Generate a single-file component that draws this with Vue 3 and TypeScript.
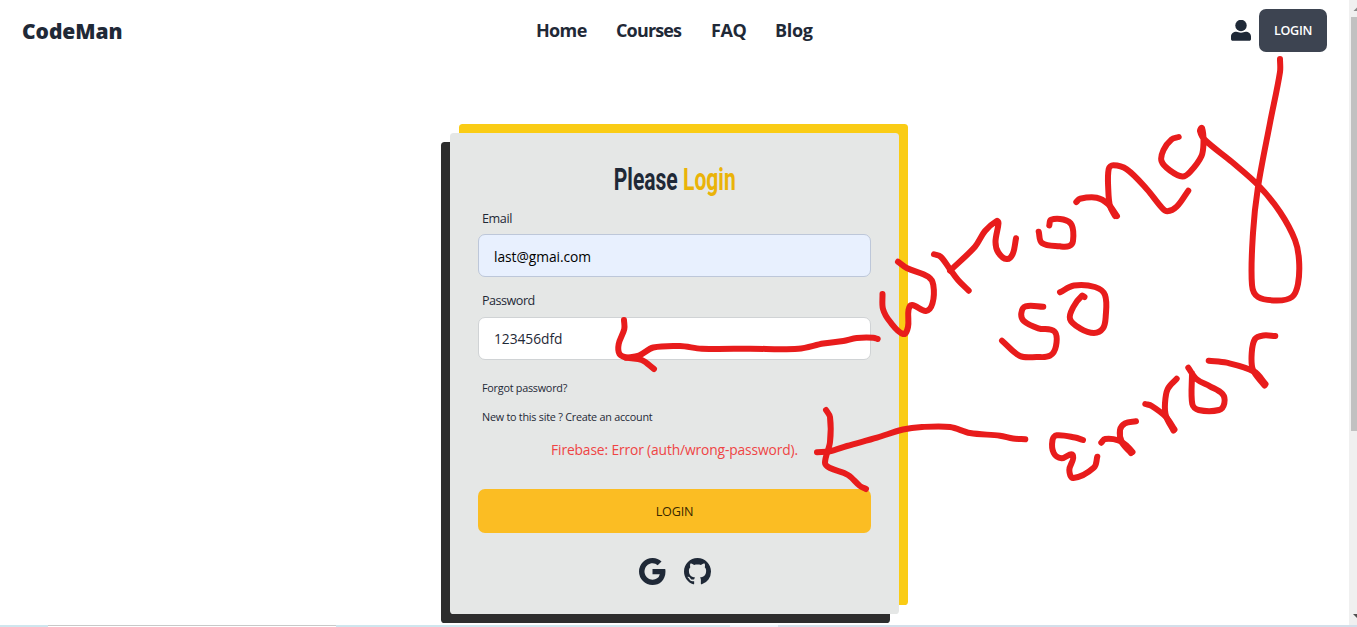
<script setup lang="ts">
import { ref } from 'vue'

type Point = [number, number]

const links = [
  { label: 'Home', cls: 'home' },
  { label: 'Courses', cls: 'courses' },
  { label: 'FAQ', cls: 'faq' },
  { label: 'Blog', cls: 'blog' },
]
const email = ref('last@gmai.com')
const password = ref('123456dfd')

// Freehand pen strokes, in page coordinates.
const strokes: Point[][] = [
  // long loop under the header button, ending in the "g"
  [[1280, 59], [1280, 72], [1270, 123], [1258, 187], [1253, 233], [1252, 285], [1258, 297], [1277, 300.5], [1292, 297], [1298, 284], [1299, 260], [1295, 240], [1280, 212], [1259, 186], [1232, 162], [1205, 140], [1200, 131], [1202, 128], [1203.5, 142], [1201.5, 156], [1190, 172], [1182.5, 176.5], [1170, 170.5], [1161.5, 161], [1163.5, 150], [1171.5, 139.5], [1178.7, 137]],
  // n
  [[1076.3, 202], [1080, 198.7], [1096.7, 197.7], [1108, 204], [1117, 216]],
  [[1115, 216], [1110, 206], [1108.3, 190], [1108.7, 169], [1113.3, 165.3], [1126.7, 169.3], [1146.7, 189], [1161.7, 207.5], [1167.3, 211.3], [1176.7, 206.7], [1188.3, 190.7]],
  // o
  [[1049.3, 225.3], [1051, 219.8], [1063.3, 219.5], [1071.7, 225], [1073, 241], [1069.3, 246], [1060, 246.3], [1042, 243], [1038.7, 231.7]],
  // r
  [[934, 254.3], [940.7, 256.7], [950, 269.3], [958, 280], [968.7, 290.7]],
  [[950, 270.7], [975, 246.7], [985, 231], [996.7, 221], [998.5, 223], [995.5, 241.7], [998.3, 252.5], [1006.7, 259], [1012.7, 254], [1016, 238.3]],
  // w
  [[898, 261.7], [906.7, 268], [928.3, 276.7], [933.3, 285], [932.5, 303.3], [926, 311], [912, 305], [908.5, 310], [908, 327], [903.3, 334], [890, 321.7], [883, 309], [882.5, 294]],
  // so
  [[1043.3, 306.7], [1025.5, 306.3], [1021.3, 313.3], [1023.8, 321], [1038.3, 328.3], [1054.5, 331.5], [1056, 346], [1050, 355.7], [1036.7, 357], [1020, 356], [1002, 340.7]],
  [[1084.5, 297], [1082, 295.7], [1073.3, 307], [1070, 319], [1080, 328.3], [1094, 333], [1103, 328.3], [1105.7, 316.7], [1105, 295], [1095, 287], [1074, 285.5], [1060, 292.3]],
  // Error
  [[1083, 440], [1075, 437.5], [1056.7, 435.3], [1052.5, 440], [1053.7, 453], [1061.7, 458.3], [1072.7, 455], [1069.3, 470], [1073.3, 478], [1094, 467.5], [1097.3, 456.7]],
  [[1101.3, 442.7], [1105, 439], [1118.3, 440.3], [1127, 446], [1132.5, 452]],
  [[1131, 453], [1122, 442.5], [1120, 430], [1125, 423.3], [1136, 421.3]],
  [[1145.3, 404], [1151.7, 406], [1166, 417], [1174.5, 429.5]],
  [[1173.5, 430.5], [1166, 416], [1165, 403.3], [1167.7, 389], [1176.7, 378.7]],
  [[1188.3, 367.7], [1196.7, 379.3], [1210, 386.3], [1222.5, 394], [1224.3, 403.3], [1219, 410], [1198.5, 410], [1192.3, 404], [1192, 373.3]],
  [[1208.7, 360.7], [1226.7, 362.7], [1254, 371.5], [1265.5, 384]],
  [[1264.5, 385.5], [1253, 370], [1251.7, 353.3], [1255, 339], [1263.3, 335.5], [1275.3, 336]],
  // arrow to the password field
  [[624, 320], [624.3, 329], [618.7, 344], [619.5, 354], [626.7, 357.7], [641.7, 360], [654, 369]],
  [[626, 357.7], [639, 355.5], [653.3, 347.5], [680, 346], [701.7, 348.7], [750, 348.7], [798.3, 348.7], [823.3, 343.5], [843.3, 341], [856.7, 338], [873.3, 337.7], [877.7, 339]],
  // arrow to the error message
  [[826, 410], [830, 417], [830, 442], [825, 463], [830, 468], [848, 475], [860, 486], [866, 489]],
  [[817, 452.3], [830, 451.3], [847, 446], [877, 437.7], [903, 429.5], [922, 427], [950, 427], [970, 433], [1000, 435.7], [1013, 438.5], [1025.3, 439.3]],
]

// Catmull-Rom spline through the points, written as cubic Béziers.
function spline(points: Point[]): string {
  const at = (i: number): Point => points[Math.max(0, Math.min(points.length - 1, i))]
  let d = `M${at(0).join(' ')}`
  for (let i = 0; i < points.length - 1; i++) {
    const [a, b, c, e] = [at(i - 1), at(i), at(i + 1), at(i + 2)]
    const len = Math.hypot(c[0] - b[0], c[1] - b[1])
    const before = Math.hypot(c[0] - a[0], c[1] - a[1]) || 1
    const after = Math.hypot(e[0] - b[0], e[1] - b[1]) || 1
    const k = len / 3
    d += `C${b[0] + ((c[0] - a[0]) / before) * k} ${b[1] + ((c[1] - a[1]) / before) * k} `
    d += `${c[0] - ((e[0] - b[0]) / after) * k} ${c[1] - ((e[1] - b[1]) / after) * k} ${c[0]} ${c[1]}`
  }
  return d
}
const paths = strokes.map(spline)
</script>

<template>
  <div class="page">
    <header class="header">
      <a class="brand">CodeMan</a>
      <nav class="nav">
        <a v-for="l in links" :key="l.label" :class="l.cls">{{ l.label }}</a>
      </nav>
      <div class="account">
        <svg class="user" viewBox="0 0 20 21">
          <circle cx="10" cy="5.5" r="5.7" />
          <path d="M0 19v-2.500C0 13.700 2.500 11.800 5.300 11.800c1.800 0 2.600.9 4.700.9s2.900-.9 4.700-.9c2.800 0 5.300 1.900 5.300 4.700V19c0 1.200-.7 1.800-1.800 1.800H1.800C.7 20.800 0 20.200 0 19z" />
        </svg>
        <button class="signin"><span>LOGIN</span></button>
      </div>
    </header>

    <main class="main">
      <form class="card" @submit.prevent>
        <h1 class="title"><span>Please <em>Login</em></span></h1>
        <label class="label l-email" for="email">Email</label>
        <input id="email" v-model="email" class="field filled" type="text" />
        <label class="label l-pass" for="password">Password</label>
        <input id="password" v-model="password" class="field pass" type="text" />
        <a class="small forgot">Forgot password?</a>
        <a class="small create">New to this site ? Create an account</a>
        <p class="error">Firebase: Error (auth/wrong-password).</p>
        <button class="submit"><span>LOGIN</span></button>
        <div class="social">
          <svg viewBox="0 0 16 16"><path d="M15.545 6.558a9.42 9.42 0 0 1 .139 1.626c0 2.434-.87 4.492-2.384 5.885h.002C11.978 15.292 10.158 16 8 16A8 8 0 1 1 8 0a7.689 7.689 0 0 1 5.352 2.082l-2.284 2.284A4.347 4.347 0 0 0 8 3.166c-2.087 0-3.86 1.408-4.492 3.304a4.792 4.792 0 0 0 0 3.063h.003c.635 1.893 2.405 3.301 4.492 3.301 1.078 0 2.004-.276 2.722-.764h-.003a3.702 3.702 0 0 0 1.599-2.431H8v-3.080h7.545z" /></svg>
          <svg viewBox="0 0 16 16"><path d="M8 0C3.580 0 0 3.580 0 8c0 3.540 2.290 6.530 5.470 7.590.4.070.55-.17.55-.38 0-.19-.01-.82-.01-1.490-2.010.37-2.530-.49-2.690-.94-.09-.23-.48-.94-.82-1.130-.28-.15-.68-.52-.01-.53.63-.01 1.080.58 1.230.82.72 1.210 1.870.87 2.330.66.070-.52.28-.87.51-1.070-1.780-.2-3.640-.89-3.640-3.950 0-.87.31-1.590.82-2.150-.08-.2-.36-1.020.08-2.120 0 0 .67-.21 2.200.82.64-.18 1.320-.27 2-.27.68 0 1.360.09 2 .27 1.530-1.040 2.200-.82 2.200-.82.44 1.100.16 1.920.08 2.120.51.56.82 1.270.82 2.150 0 3.070-1.870 3.750-3.650 3.950.29.25.54.73.54 1.480 0 1.070-.01 1.930-.01 2.200 0 .21.15.46.55.38A8.012 8.012 0 0 0 16 8c0-4.420-3.580-8-8-8z" /></svg>
        </div>
      </form>
    </main>

    <div class="scrollbar">
      <svg class="arrow" viewBox="0 0 8 17"><path d="M4.500 11 8 7.500V11z" fill="#8a8a8a" /></svg>
      <div class="thumb"></div>
      <svg class="arrow end" viewBox="0 0 8 17"><path d="M4 6h4v4z" fill="#505050" /></svg>
    </div>
    <div class="strip"><i class="tab"></i><i class="gap"></i><i class="light"></i><i class="rest"></i></div>

    <svg class="ink" viewBox="0 0 1357 627">
      <path v-for="(d, i) in paths" :key="i" :d="d" />
    </svg>
  </div>
</template>

<style>
html, body { margin: 0; overflow: hidden; background: #fff; }
</style>

<style scoped>
* { box-sizing: border-box; }
.page { position: relative; width: 1357px; height: 627px; overflow: hidden; color: #1f2937; font-family: "Open Sans", "Noto Sans", sans-serif; background: #fff; }
.header { display: grid; grid-template-columns: 514px 1fr auto; align-items: center; height: 61px; padding: 0 30px 0 22px; }
.brand { font-size: 21px; font-weight: 800; letter-spacing: -.05px; white-space: nowrap; }
.nav { display: grid; grid-template-columns: 80px 95px 64px auto; justify-content: start; padding-bottom: 1px; font-size: 18px; font-weight: 700; white-space: nowrap; }
.home { letter-spacing: -.65px; }
.courses { letter-spacing: -.85px; }
.faq { letter-spacing: -.4px; }
.blog { letter-spacing: -.3px; }
.account { display: flex; align-items: center; gap: 8px; }
.user { width: 20px; height: 21px; fill: #1f2937; }
.signin { width: 68px; height: 43px; padding: 0; border: 0; border-radius: 7px; background: #3d4451; color: #fff; font: 600 12.600px "Open Sans", sans-serif; letter-spacing: -.3px; }
.main { display: flex; padding: 72px 0 0 450px; }
.card { display: flex; flex-direction: column; width: 449px; height: 481px; padding: 24px 28px 0; border-radius: 3.600px; background: #e5e7e6; box-shadow: -9px 9px #2d2d2d, 9px -9px #facc15; }
.title { margin: 0; height: 46px; text-align: center; font: 700 31px/45px Roboto, sans-serif; white-space: nowrap; }
.title span { display: inline-block; transform: scaleX(.68); }
.title em { color: #eab308; font-style: normal; }
.label { padding-left: 4px; font-size: 12.600px; line-height: 18px; letter-spacing: -.4px; }
.l-email { margin: 7px 0 6px; }
.l-pass { margin: 15px 0 7px; letter-spacing: -.5px; }
.field { width: 393px; height: 43px; padding: 0 15px; border: 1px solid #d0d3d5; border-radius: 7px; outline: 0; background: #fff; color: #1f2937; font: 13.800px "Open Sans", sans-serif; letter-spacing: -.05px; }
.filled { border-color: #bdc7d9; background: #e8f0fe; color: #000; padding-top: 2px; }
.small { padding-left: 4px; font-size: 10.800px; line-height: 16px; white-space: nowrap; letter-spacing: -.24px; }
.forgot { margin-top: 20px; }
.create { margin-top: 13px; }
.error { margin: 15px 0 0; text-align: center; color: #ef4444; font-size: 13.800px; line-height: 20px; letter-spacing: -.13px; white-space: nowrap; }
.submit { width: 393px; height: 44px; margin-top: 29px; padding: 0; border: 0; border-radius: 7px; background: #fbbd23; color: #382800; font: 500 12.600px "Open Sans", sans-serif; letter-spacing: -.2px; flex: none; }
.social { display: flex; justify-content: center; gap: 18px; margin-top: 25px; }
.social svg { width: 27px; height: 27px; fill: #1f2937; }
.scrollbar { position: absolute; top: 0; right: 0; display: flex; flex-direction: column; width: 8px; height: 625px; background: #f0f0f0; }
.arrow { width: 8px; height: 17px; flex: none; }
.thumb { width: 6px; height: 414px; margin-left: 2px; background: #c1c1c1; }
.end { margin-top: auto; }
.strip { position: absolute; left: 0; bottom: 0; display: flex; width: 1357px; height: 2px; padding-left: 48px; background: #cfe6ee; }
.tab { width: 288px; border-top: 1px solid #c8c8c8; background: #fff; }
.gap { width: 394px; }
.light { width: 48px; background: #eef3fb; }
.rest { flex: 1; background: #d3dfea; }
.ink { position: absolute; inset: 0; width: 1357px; height: 627px; fill: none; stroke: #e81c1c; stroke-width: 6px; stroke-linecap: round; stroke-linejoin: round; pointer-events: none; }
</style>
